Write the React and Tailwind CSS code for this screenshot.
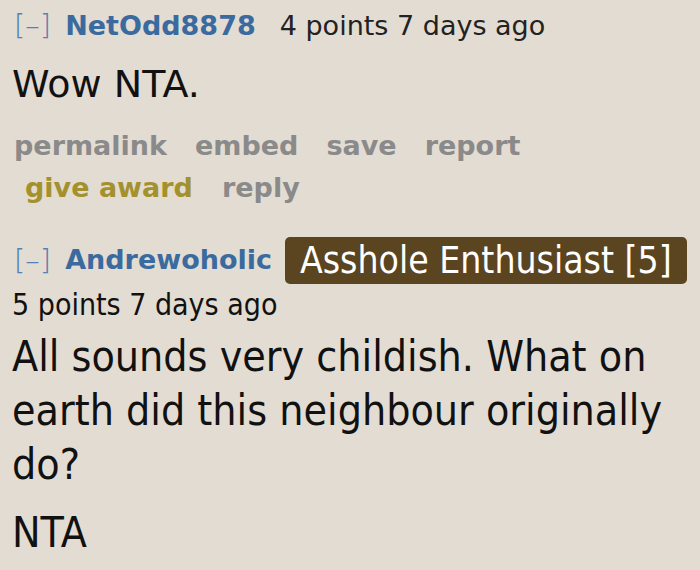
import React from "react";

const sans = { fontFamily: '"DejaVu Sans", Verdana, sans-serif' };
const cond = { fontFamily: '"DejaVu Sans Condensed", "DejaVu Sans", sans-serif' };

const links = ["permalink", "embed", "save", "report"];

const App = () => {
	return (
		<div className="w-[700px] h-[570px] overflow-hidden bg-[#e3dcd2] text-[#111]" style={sans}>
			{/* first comment */}
			<div className="pl-[14px] pt-[4px]">
				<div className="flex items-baseline h-[38px]">
					<span className="text-[29px] font-light text-[#5580b3]">[–]</span>
					<span className="ml-[14px] text-[27px] font-bold text-[#3b6a9e]">NetOdd8878</span>
					<span className="ml-[24px] text-[27px] text-[#222]">4 points 7 days ago</span>
				</div>
				<p className="-ml-[2px] mt-[20px] text-[38px] leading-[44px]">Wow NTA.</p>
				<div className="mt-[20px] flex gap-[28px] text-[27px] font-bold text-[#8a8a8a] leading-[40px]">
					{links.map(l => <span key={l}>{l}</span>)}
				</div>
				<div className="ml-[11px] flex gap-[29px] text-[27px] font-bold leading-[44px]">
					<span className="text-[#a3912e]">give award</span>
					<span className="text-[#8a8a8a]">reply</span>
				</div>
			</div>

			{/* second comment */}
			<div className="pl-[14px] mt-[27px]" style={cond}>
				<div className="flex items-center">
					<span className="text-[29px] font-light text-[#5580b3]" style={sans}>[–]</span>
					<span className="ml-[14px] text-[27px] font-bold text-[#3b6a9e]" style={sans}>Andrewoholic</span>
					<span className="ml-[13px] rounded-[5px] bg-[#5b4420] px-[15px] h-[47px] flex items-center text-[37px] text-white">Asshole Enthusiast [5]</span>
				</div>
				<div className="-ml-[2px] mt-[2px] text-[30px] text-[#111] leading-[38px]">5 points 7 days ago</div>
				<div className="-ml-[2px] mt-[6px] text-[42.5px] leading-[54px] text-[#111]">
					<p>All sounds very childish. What on earth did this neighbour originally do?</p>
					<p className="mt-[14px]">NTA</p>
				</div>
			</div>
		</div>
	);
};

export default App;
